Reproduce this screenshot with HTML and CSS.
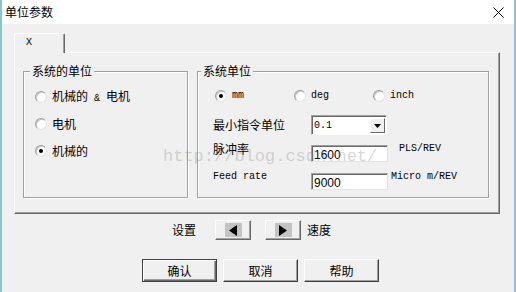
FILE: index.html
```html
<!DOCTYPE html>
<html lang="zh-CN">

<head>
    <meta charset="UTF-8">
    <title>单位参数</title>
    <link rel="stylesheet" href="styles.css">
</head>

<body>
    <div class="window">
        <div class="titlebar">
            <span class="title">单位参数</span>
            <svg class="close" width="11" height="11" viewBox="0 0 11 11">
                <path d="M0.5 0.5L10.5 10.5M10.5 0.5L0.5 10.5" stroke="#000" stroke-width="1" fill="none" />
            </svg>
        </div>

        <div class="content">
            <div class="tabs">
                <div class="tab">X</div>
            </div>

            <div class="panel">
                <div class="group group-left">
                    <span class="legend">系统的单位</span>
                    <div class="radio"><span class="dot"></span><span>机械的<span class="latin"> &amp; </span>电机</span></div>
                    <div class="radio"><span class="dot"></span><span>电机</span></div>
                    <div class="radio checked"><span class="dot"></span><span>机械的</span></div>
                </div>

                <div class="group group-right">
                    <span class="legend">系统单位</span>
                    <div class="radio-row">
                        <div class="radio checked"><span class="dot"></span><span class="latin">mm</span></div>
                        <div class="radio"><span class="dot"></span><span class="latin">deg</span></div>
                        <div class="radio"><span class="dot"></span><span class="latin">inch</span></div>
                    </div>

                    <div class="field field-combo">
                        <span class="label">最小指令单位</span>
                        <div class="combo">
                            <span class="combo-value latin">0.1</span>
                            <span class="combo-btn">
                                <svg width="7" height="4" viewBox="0 0 7 4"><path d="M0 0H7L3.5 4Z" fill="#000" /></svg>
                            </span>
                        </div>
                    </div>

                    <div class="field">
                        <span class="label">脉冲率</span>
                        <div class="textbox">1600</div>
                        <span class="unit unit-pls latin">PLS/REV</span>
                    </div>

                    <div class="field field-last">
                        <span class="label latin">Feed rate</span>
                        <div class="textbox">9000</div>
                        <span class="unit latin">Micro m/REV</span>
                    </div>
                </div>
            </div>

            <div class="speed-row">
                <span>设置</span>
                <button class="arrow-btn">
                    <span class="arrow-face">
                        <svg width="8" height="11" viewBox="0 0 8 11"><path d="M8 0V11L0 5.5Z" fill="#000" /></svg>
                    </span>
                </button>
                <button class="arrow-btn">
                    <span class="arrow-face">
                        <svg width="8" height="11" viewBox="0 0 8 11"><path d="M0 0V11L8 5.5Z" fill="#000" /></svg>
                    </span>
                </button>
                <span class="speed-label">速度</span>
            </div>

            <div class="actions">
                <button class="btn btn-default">确认</button>
                <button class="btn">取消</button>
                <button class="btn">帮助</button>
            </div>
        </div>

        <!-- watermark from the original screenshot -->
        <div class="watermark">http://blog.csdn.net/</div>
    </div>
</body>

</html>
```

FILE: styles.css
```css
* {
    box-sizing: border-box;
}

body {
    margin: 0;
    font-family: "Noto Sans CJK SC", "Liberation Sans", sans-serif;
    font-size: 12px;
    color: #000;
    background: #f0f0f0;
}

.window {
    position: relative;
    width: 516px;
    height: 292px;
    border-left: 2px solid #8fc1ce;
    border-right: 2px solid #8fc1ce;
    background: #f0f0f0;
    overflow: hidden;
}

.titlebar {
    height: 24px;
    background: #fff;
    display: flex;
    align-items: center;
    justify-content: space-between;
    padding: 0 10px 0 3px;
}

.title {
    line-height: 14px;
}

.latin {
    font-family: "Liberation Mono", monospace;
    font-size: 10px;
    white-space: pre;
}

.content {
    padding: 9px 12px 0;
}

/* tab strip */
.tabs {
    display: flex;
    height: 20px;
}

.tab {
    position: relative;
    z-index: 1;
    width: 51px;
    height: 20px;
    background: #f0f0f0;
    border-top: 1px solid #fff;
    border-left: 1px solid #fff;
    border-right: 1px solid #696969;
    box-shadow: inset -1px 0 #a0a0a0;
    border-top-left-radius: 2px;
    border-top-right-radius: 2px;
    font-family: "Liberation Mono", monospace;
    font-size: 10px;
    line-height: 18px;
    padding-left: 11px;
}

.panel {
    margin-top: -1px;
    width: 486px;
    height: 162px;
    border-top: 1px solid #fff;
    border-left: 1px solid #fff;
    border-right: 1px solid #696969;
    border-bottom: 1px solid #696969;
    box-shadow: inset -1px -1px #a0a0a0;
    display: flex;
    gap: 9px;
    padding: 18px 0 0 8px;
}

/* group boxes */
.group {
    position: relative;
    height: 127px;
    border: 1px solid #a0a0a0;
    box-shadow: 1px 1px 0 #fff, inset 1px 1px 0 #fff;
    display: flex;
    flex-direction: column;
}

.legend {
    position: absolute;
    top: -8px;
    left: 6px;
    padding: 0 2px;
    background: #f0f0f0;
    line-height: 14px;
}

.group-left {
    width: 165px;
    padding: 18px 0 0 11px;
    gap: 13px;
}

.group-right {
    width: 292px;
    padding: 17px 0 0 15px;
}

.group-right .legend {
    left: 3px;
}

/* radio buttons */
.radio {
    display: flex;
    align-items: center;
    gap: 5px;
    height: 14px;
    line-height: 14px;
}

.dot {
    position: relative;
    width: 12px;
    height: 12px;
    border-radius: 50%;
    background: #fff;
    border: 1px solid;
    border-color: #a0a0a0 #e3e3e3 #e3e3e3 #a0a0a0;
    box-shadow: inset 1px 1px 0 #c8c8c8;
    flex-shrink: 0;
}

.checked .dot::after {
    content: "";
    position: absolute;
    left: 3px;
    top: 3px;
    width: 4px;
    height: 4px;
    border-radius: 50%;
    background: #000;
}

.radio-row {
    display: flex;
    padding-left: 2px;
}

.radio-row .radio {
    width: 79px;
}

/* label / field rows */
.field {
    display: flex;
    align-items: flex-start;
    height: 20px;
    margin-top: 7px;
}

.field-combo {
    margin-top: 12px;
}

.field-last {
    margin-top: 8px;
}

.label {
    width: 98px;
    line-height: 14px;
}

.field-combo .label {
    margin-top: 3px;
}

.combo {
    width: 76px;
    height: 20px;
    background: #fff;
    border: 1px solid;
    border-color: #a0a0a0 #fff #fff #a0a0a0;
    box-shadow: inset 1px 1px 0 #696969;
    display: flex;
    align-items: center;
    justify-content: space-between;
    padding: 1px 1px 0 2px;
}

.combo-btn {
    width: 15px;
    height: 15px;
    background: #f0f0f0;
    border-top: 1px solid #fff;
    border-left: 1px solid #fff;
    border-right: 1px solid #696969;
    border-bottom: 1px solid #696969;
    display: flex;
    align-items: center;
    justify-content: center;
}

.textbox {
    width: 77px;
    height: 17px;
    margin-top: 3px;
    background: #fff;
    border: 1px solid;
    border-color: #a0a0a0 #e3e3e3 #e3e3e3 #a0a0a0;
    box-shadow: inset 1px 1px 0 #696969;
    font-family: "Liberation Sans", sans-serif;
    font-size: 12px;
    line-height: 16px;
    padding: 1px 0 0 2px;
}

.unit {
    margin-left: 3px;
    line-height: 14px;
}

.unit-pls {
    margin-left: 11px;
}

/* speed buttons */
.speed-row {
    display: flex;
    align-items: center;
    height: 20px;
    margin: 6px 0 0 158px;
    line-height: 14px;
}

button {
    font: inherit;
    color: inherit;
    padding: 0;
    margin: 0;
    cursor: pointer;
}

.arrow-btn {
    width: 36px;
    height: 20px;
    margin-left: 14px;
    background: #f0f0f0;
    border-top: 1px solid #fff;
    border-left: 1px solid #fff;
    border-right: 1px solid #696969;
    border-bottom: 1px solid #696969;
    box-shadow: inset -1px -1px #a0a0a0;
    display: flex;
    align-items: center;
    justify-content: center;
}

.arrow-btn:first-of-type {
    margin-left: 19px;
}

.arrow-face {
    width: 17px;
    height: 14px;
    background: #c3c3c3;
    display: flex;
    align-items: center;
    justify-content: center;
}

.speed-label {
    margin-left: 6px;
}

/* dialog buttons */
.actions {
    display: flex;
    gap: 6px;
    margin: 19px 0 0 128px;
}

.btn {
    width: 75px;
    height: 23px;
    background: #f0f0f0;
    border-top: 1px solid #fff;
    border-left: 1px solid #fff;
    border-right: 1px solid #404040;
    border-bottom: 1px solid #404040;
    box-shadow: inset -1px -1px #a0a0a0;
    line-height: 14px;
}

.btn-default {
    border: 1px solid #404040;
    box-shadow: inset 1px 1px #fff, inset -1px -1px #696969, inset -2px -2px #a0a0a0;
}

.watermark {
    position: absolute;
    left: 161px;
    top: 148px;
    font-family: "Liberation Mono", monospace;
    font-size: 17px;
    line-height: 17px;
    color: rgba(140, 140, 140, 0.35);
    pointer-events: none;
}
```
